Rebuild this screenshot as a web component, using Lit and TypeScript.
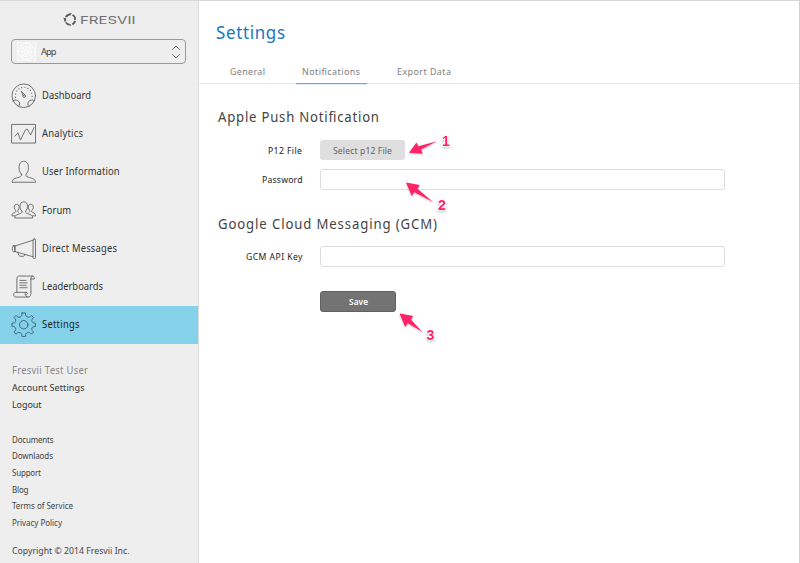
import { LitElement, html, css, svg } from "lit";
import { customElement, property } from "lit/decorators.js";

const icons: Record<string, unknown> = {
  dashboard: svg`<circle cx="13" cy="13" r="12"/><path d="M2 18.200C5.200 15.800 9 18.500 8.800 21.500c-.1 1-.5 1.800-1.200 2.400M24 18.200c-3.200-2.400-7 .300-6.800 3.300.1 1 .5 1.800 1.200 2.400"/><circle cx="13.500" cy="13.400" r="1.300"/><path d="M12.300 12.800l-1.700-4.200 3.600 3.600"/><path stroke-width="1.100" stroke-dasharray=".1 3.100" d="M4.500 14.500C4.200 8 8 4.500 13 4.500s8.800 3.500 8.500 10"/>`,
  analytics: svg`<rect x="1" y="3.500" width="24" height="19"/><path d="M4 15.500l3-3.500 2.700 7.500 5-10.500 1.800-.8 3.500 6 3.500-7.500"/>`,
  user: svg`<path d="M10.600 15.500C9 13.800 8.200 11.500 8.200 8.600 8.200 4.800 10 2.300 13 2.300s4.800 2.500 4.800 6.300c0 2.900-.8 5.200-2.400 6.900-.6 1.700.2 2.400 2 3 4.500 1.300 7.600 1.800 7.600 5.200H1c0-3.400 3.100-3.900 7.600-5.200 1.800-.6 2.600-1.300 2-3z"/>`,
  forum: svg`<path d="M11 14.300c-1.300-1.200-1.800-2.800-1.800-4.900 0-2.800 1.400-4.500 3.800-4.500s3.800 1.700 3.800 4.500c0 2.100-.5 3.700-1.800 4.900-.4 1.500.1 2.100 1.500 2.600 3.600 1.100 5.700 1.800 5.700 4.500H3.800c0-2.700 2.100-3.400 5.700-4.500 1.400-.5 1.900-1.100 1.500-2.600z"/><path d="M4 19.200H1c0-2.300 1-2.800 3-3.500 1-.4 1.200-.9.800-2-1.100-.8-1.500-2-1.500-3.300 0-1.900.9-3 2.500-3s2.500 1.100 2.500 3c0 1.300-.4 2.500-1.300 3.300-.3 1.200 0 1.600.6 1.900M22 19.200h3c0-2.300-1-2.800-3-3.500-1-.4-1.200-.9-.8-2 1.100-.8 1.500-2 1.500-3.300 0-1.900-.9-3-2.500-3s-2.500 1.100-2.500 3c0 1.300.4 2.500 1.300 3.300.3 1.200 0 1.600-.6 1.900"/>`,
  megaphone: svg`<path d="M4 10.200L22.500 4.300M4 15.800l18.500 5.400M4 10.200v5.600M2.300 10H4v6H2.300C1 16 1 10 2.300 10z"/><rect x="22.500" y="3" width="2.500" height="20" rx="1.200"/><path d="M7 16.700c.2 2.500 1.200 3.900 3 4h2c1.500 0 2.100-.9 1.900-2"/>`,
  scroll: svg`<path d="M6 18.700V5c0-2 .9-2.900 2.300-2.900h13.500c1.400 0 2 .8 2 3h-3.500M20.300 18V5c0-1.800.6-2.700 1.800-2.900M20.300 18c0 3.500-.3 5.500-3 5.500H5c-3 0-3-4.800 0-4.800h10.500M17.300 23.500c-3.200 0-3.500-4.800-1.800-4.800 2 0 1.500 2.500 0 2.500M9 6.500h6.500M9 9h7.500M9 11.500h6.500M9 14h7.500"/>`,
  gear: svg`<circle cx="13" cy="13" r="4.300"/><path d="M11.300 1h3.400c.3 3.300.8 3.700 2.200 4.100 1.500.6 2.100.5 4-1.600l2.100 2.200c-2.100 2.200-2.100 2.800-1.600 3.900.5 1.400 1.200 1.700 3.600 1.900v3.100c-2.400.2-3.100.5-3.600 1.900-.5 1.100-.5 1.700 1.600 3.900l-2.100 2.200c-1.900-2.100-2.500-2.200-4-1.600-1.400.4-1.900.8-2.200 4.100h-3.400c-.3-3.300-.8-3.700-2.200-4.100-1.500-.6-2.100-.5-4 1.600L3 20.400c2.100-2.200 2.100-2.800 1.600-3.900-.5-1.400-1.200-1.700-3.600-1.900v-3.100c2.400-.2 3.100-.5 3.600-1.900.5-1.100.5-1.700-1.600-3.900l2.100-2.200c1.900 2.100 2.500 2.200 4 1.600 1.400-.4 1.900-.8 2.200-4.100z"/>`,
};

const navItems: [string, string, number][] = [
  ["dashboard", "Dashboard", 49],
  ["analytics", "Analytics", 41],
  ["user", "User Information", 77.5],
  ["forum", "Forum", 29],
  ["megaphone", "Direct Messages", 75],
  ["scroll", "Leaderboards", 61],
  ["gear", "Settings", 37.5],
];

const CONDENSE = 0.94;

/* Single line of slightly condensed text, letter-spaced to fill a fixed measure. */
@customElement("ui-label")
export class UiLabel extends LitElement {
  @property() text = "";
  @property({ type: Number }) measure = 0;
  static styles = css`
    :host { display: block; line-height: 16px; }
    svg { display: block; overflow: visible; height: 16px; }
    text { fill: currentColor; }
  `;
  render() {
    return html`<svg width=${this.measure}><text y="12" transform="scale(${CONDENSE} 1)" textLength=${this.measure / CONDENSE}>${this.text}</text></svg>`;
  }
}

@customElement("side-bar")
export class SideBar extends LitElement {
  static styles = css`
    :host { display: flex; flex-direction: column; width: 198px; flex: none; background: #eee; border-right: 1px solid #dcdcdc; color: #444; }
    .brand { display: block; margin: 10px 0 0 62px; }
    .brand text { font: 400 10.500px Inter, sans-serif; fill: #707070; }
    .picker { box-sizing: border-box; display: flex; align-items: center; margin: 11px 0 0 11px; width: 175px; height: 25px; border: 1px solid #999; border-radius: 4px; padding: 0 4px 0 5px; font-size: 9.800px; }
    .grid { flex: none; margin-right: 5px; }
    .picker ui-label { flex: 1; margin-top: -2px; }
    nav { margin-top: 12.500px; }
    .item { display: flex; align-items: center; height: 38.200px; padding-left: 10.500px; gap: 6px; font-size: 10px; color: #333; }
    .item ui-label { margin-top: -1px; }
    .active { background: #85d1e9; color: #222; }
    .ico { flex: none; fill: none; stroke: #5a5a5a; stroke-width: .85; stroke-linejoin: round; stroke-linecap: round; }
    .active .ico { stroke: #2f5666; }
    .account { margin: 18px 0 0 11.500px; font-size: 9.600px; display: grid; grid-auto-rows: 17.200px; color: #333; }
    .who { color: #888; font-size: 10px; }
    .links { margin: 17.500px 0 0 11.500px; font-size: 8.500px; display: grid; grid-auto-rows: 16.550px; }
    .copy { margin: 11.500px 0 0 11.500px; font-size: 9.200px; }
  `;
  render() {
    const links: [string, number][] = [["Documents", 41.5], ["Downlaods", 41], ["Support", 29], ["Blog", 16.5], ["Terms of Service", 61], ["Privacy Policy", 50]];
    return html`
      <svg class="brand" width="76" height="17">
        <g fill="#5a5a5a">
          <path d="M6.800 2.500L10 1.900 8.400 4.300Q6 4.700 4.800 6.600L2.900 5.600Q4.200 3.300 6.800 2.500z"/>
          <path d="M11 3.300Q14.200 5 14 8.500L12.400 9.500 11.900 6.500Q11.300 5 9.900 4.400z"/>
          <path d="M14.200 9.700Q13.600 12.700 11 14.300L9.800 12.700Q11.500 11.600 12 10z"/>
          <path d="M9.500 14.700L5.800 14.200Q4 13.400 3 11.500L4.800 11.300Q6 12.700 8.300 13z"/>
          <path d="M1 6.800L4.200 7.200Q3.800 8.800 4.300 10.300L2.500 10.700Q2 9.500 2.100 8.300z"/>
        </g>
        <text x="18" y="12.500" textLength="55.500" lengthAdjust="spacingAndGlyphs">FRESVII</text>
      </svg>
      <div class="picker">
        <svg class="grid" width="19" height="19" viewBox="0 0 19 19" fill="none" stroke="#fff" stroke-width=".8">
          <rect x=".5" y=".5" width="18" height="18" stroke-dasharray="2 1"/><circle cx="9.500" cy="9.500" r="8"/><circle cx="9.500" cy="9.500" r="5"/><circle cx="9.500" cy="9.500" r="2.500"/><path stroke-width=".5" d="M.5.5l18 18M18.500.5l-18 18M9.500 0v19M0 9.500h19M6 0v19M13 0v19M0 6h19M0 13h19"/>
        </svg>
        <ui-label text="App" measure="15.500"></ui-label>
        <svg width="10" height="16" fill="none" stroke="#777"><path d="M1 6l4-4 4 4M1 10l4 4 4-4"/></svg>
      </div>
      <nav>
        ${navItems.map(([icon, text, w]) => html`<div class="item ${icon === "gear" ? "active" : ""}">
          <svg class="ico" width="25.500" height="25.500" viewBox="0 0 26 26">${icons[icon]}</svg>
          <ui-label .text=${text} .measure=${w}></ui-label>
        </div>`)}
      </nav>
      <div class="account">
        <ui-label class="who" text="Fresvii Test User" measure="76"></ui-label>
        <ui-label text="Account Settings" measure="72.500"></ui-label>
        <ui-label text="Logout" measure="29.500"></ui-label>
      </div>
      <div class="links">${links.map(([t, w]) => html`<ui-label .text=${t} .measure=${w}></ui-label>`)}</div>
      <ui-label class="copy" text="Copyright © 2014 Fresvii Inc." measure="117.500"></ui-label>
    `;
  }
}

@customElement("app-root")
export class AppRoot extends LitElement {
  static styles = css`
    :host { display: flex; box-sizing: border-box; position: relative; width: 800px; height: 563px; overflow: hidden; background: #fff; border-top: 1px solid #d8d8d8; border-right: 1px solid #d0d0d0; font-family: "Noto Sans", sans-serif; }
    main { flex: 1; }
    .title { margin: 26px 0 0 17px; font-size: 18px; color: #1b75bc; }
    .tabs { display: flex; height: 24px; margin-top: 16px; padding-left: 20px; border-bottom: 1px solid #e9e9e9; font-size: 9.500px; color: #808080; }
    .tab { box-sizing: border-box; height: 25px; padding: 4px 6.500px 0; border-bottom: 1px solid transparent; margin: 0 12px 0 4.500px; }
    .tab + .tab { margin-left: 12px; }
    .on { border-bottom-color: #6fa5e0; box-shadow: 0 1px 0 #dfebf8; }
    .heading { margin-left: 19px; font-size: 14px; color: #444; }
    .first { margin-top: 26px; }
    .second { margin-top: 26.500px; }
    .row { display: grid; grid-template-columns: 103px 405px; column-gap: 18px; align-items: center; justify-items: start; font-size: 9.200px; color: #222; }
    .row > .name { justify-self: end; }
    .file { margin-top: 14px; height: 20px; }
    .pass { margin-top: 9px; height: 21px; }
    .pass .name, .key .name { margin-top: -1px; }
    .key { margin-top: 13px; height: 21px; }
    .send { margin-top: 24px; height: 21px; }
    .field { box-sizing: border-box; width: 405px; height: 21px; border: 1px solid #dcdcdc; border-radius: 3px; background: #fff; }
    .btn { box-sizing: border-box; display: flex; align-items: center; justify-content: center; border-radius: 3px; }
    .pick { width: 85px; height: 20px; background: #dfdfdf; color: #666; }
    .save { width: 76px; height: 21px; background: #737373; border: 1px solid #606060; color: #fff; font-weight: 600; font-size: 8.800px; }
    .save ui-label { margin-top: -1px; }
    .notes { position: absolute; left: 400px; top: 119px; filter: drop-shadow(0 1px 1px rgba(0,0,0,.22)); }
    .notes path { fill: #ff2467; }
    .notes text { font: bold 14px "Liberation Sans", sans-serif; fill: #ff1c60; stroke: #fff; stroke-width: 2px; paint-order: stroke; }
  `;
  render() {
    return html`
      <side-bar></side-bar>
      <main>
        <ui-label class="title" text="Settings" measure="69"></ui-label>
        <div class="tabs">
          <div class="tab"><ui-label text="General" measure="35"></ui-label></div>
          <div class="tab on"><ui-label text="Notifications" measure="58"></ui-label></div>
          <div class="tab"><ui-label text="Export Data" measure="54"></ui-label></div>
        </div>
        <ui-label class="heading first" text="Apple Push Notification" measure="161"></ui-label>
        <div class="row file">
          <ui-label class="name" text="P12 File" measure="34"></ui-label>
          <div class="btn pick"><ui-label text="Select p12 File" measure="59"></ui-label></div>
        </div>
        <div class="row pass"><ui-label class="name" text="Password" measure="40.500"></ui-label><div class="field"></div></div>
        <ui-label class="heading second" text="Google Cloud Messaging (GCM)" measure="219"></ui-label>
        <div class="row key"><ui-label class="name" text="GCM API Key" measure="56.500"></ui-label><div class="field"></div></div>
        <div class="row send"><span></span><div class="btn save"><ui-label text="Save" measure="19"></ui-label></div></div>
      </main>
      <svg class="notes" width="60" height="235">
        <path d="M9 32.700L16.500 22.500 18.300 26.300 37 21.300 21 29.500 22.700 33.700z"/>
        <path d="M6 62.500L19.700 65 17.500 68.700 33 82 14.300 72.300 11.700 76z"/>
        <path d="M-.5 193.500L13.200 196 11 199.700 22.500 212 7.800 203.300 5.200 207z"/>
        <text x="42" y="25.500">1</text><text x="38" y="89.700">2</text><text x="26.500" y="219.500">3</text>
      </svg>
    `;
  }
}
